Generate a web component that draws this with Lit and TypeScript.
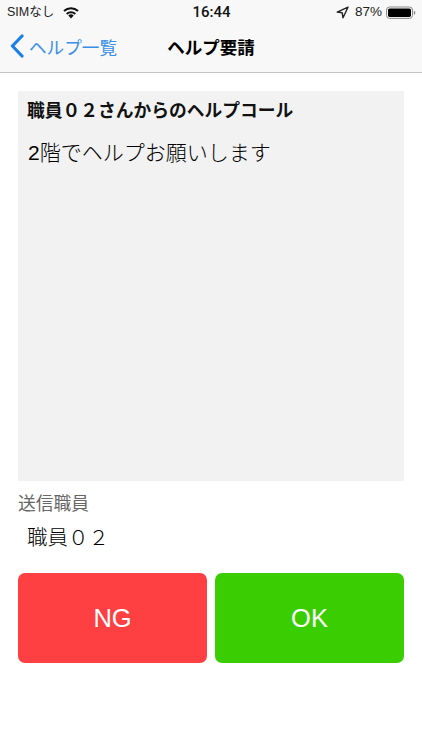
import { LitElement, html, css } from "lit";
import { customElement } from "lit/decorators.js";

@customElement("app-root")
export class AppRoot extends LitElement {
  static styles = css`
    :host {
      display: block;
      width: 422px;
      height: 750px;
      background: #fff;
      color: #000;
      font-family: "Liberation Sans", "Noto Sans CJK JP", sans-serif;
      overflow: hidden;
    }
    .top {
      height: 72px;
      background: #f8f8f8;
      border-bottom: 1px solid #c4c4c6;
      display: flex;
      flex-direction: column;
    }
    .status {
      height: 24px;
      padding: 0 6px 0 7px;
      display: grid;
      grid-template-columns: 1fr auto 1fr;
      align-items: center;
      font-size: 12.5px;
      line-height: 24px;
    }
    .status-left, .status-right { display: flex; align-items: center; }
    .status-left { gap: 8px; color: #222; }
    .status-right { justify-content: flex-end; color: #222; font-size: 13.5px; }
    .arrow { margin-right: 2px; }
    .pct { margin-right: 4px; }
    .time { font-family: Roboto, sans-serif; font-weight: 500; font-size: 15px; color: #111; }
    .nav {
      flex: 1;
      display: grid;
      grid-template-columns: 1fr auto 1fr;
      align-items: center;
      padding: 0 0 4px 0;
    }
    .back { display: flex; align-items: center; gap: 5px; padding-left: 10px; color: #3b8ee8; font-size: 17.6px; }
    .title { font-size: 17.5px; font-weight: 700; }
    .content { padding: 18px 18px 0; display: flex; flex-direction: column; }
    .box {
      height: 390px;
      background: #f2f2f2;
      padding: 8px 10px 0;
      box-sizing: border-box;
    }
    .subject { font-size: 17.75px; font-weight: 700; line-height: 24px; margin-left: -1px; color: #111; }
    .message { font-size: 21px; font-weight: 300; line-height: 30px; margin-top: 15px; color: #000; }
    .label { margin-top: 11px; font-size: 17.75px; line-height: 24px; color: #666; }
    .sender { margin-top: 7px; padding-left: 9px; font-size: 20.5px; font-weight: 300; line-height: 30px; color: #000; }
    .actions { margin-top: 20px; display: grid; grid-template-columns: 1fr 1fr; gap: 8px; }
    .btn {
      height: 90px;
      border: 0;
      border-radius: 7px;
      color: #fff;
      font: inherit;
      font-size: 25.5px;
      padding: 0;
    }
    .ng { background: #ff4042; }
    .ok { background: #3acd02; }
  `;

  render() {
    return html`
      <div class="top">
        <div class="status">
          <div class="status-left">
            <span>SIMなし</span>
            <svg width="18" height="13" viewBox="0 0 18 13">
              <path d="M9 12.6 6.3 9.6a3.9 3.9 0 0 1 5.4 0Z" fill="#111" />
              <path d="M4.7 7.9a6.3 6.3 0 0 1 8.6 0" fill="none" stroke="#111" stroke-width="2" />
              <path d="M2 5a10.2 10.2 0 0 1 14 0" fill="none" stroke="#111" stroke-width="2" />
            </svg>
          </div>
          <div class="time">16:44</div>
          <div class="status-right">
            <svg class="arrow" width="13" height="13" viewBox="0 0 13 13">
              <path d="M12 1.2 1.2 6.1l5 .7.8 5Z" fill="none" stroke="#222" stroke-width="1.4" stroke-linejoin="round" />
            </svg>
            <span class="pct">&nbsp;87%</span>
            <svg width="30" height="13" viewBox="0 0 30 13">
              <rect x=".5" y="1" width="26" height="11.4" rx="3" fill="none" stroke="#888" />
              <rect x="2" y="2.5" width="23" height="8.4" rx="1.6" fill="#000" />
              <rect x="27.8" y="5" width="1.4" height="3.6" rx=".7" fill="#888" />
            </svg>
          </div>
        </div>
        <div class="nav">
          <div class="back">
            <svg width="14" height="24" viewBox="0 0 14 24">
              <path d="M12 2 2.4 12 12 22" fill="none" stroke="#1a7fe8" stroke-width="3.2" stroke-linecap="round" stroke-linejoin="round" />
            </svg>
            <span>ヘルプ一覧</span>
          </div>
          <div class="title">ヘルプ要請</div>
          <div></div>
        </div>
      </div>
      <div class="content">
        <div class="box">
          <div class="subject">職員０２さんからのヘルプコール</div>
          <div class="message">2階でヘルプお願いします</div>
        </div>
        <div class="label">送信職員</div>
        <div class="sender">職員０２</div>
        <div class="actions">
          <button class="btn ng">NG</button>
          <button class="btn ok">OK</button>
        </div>
      </div>
    `;
  }
}
